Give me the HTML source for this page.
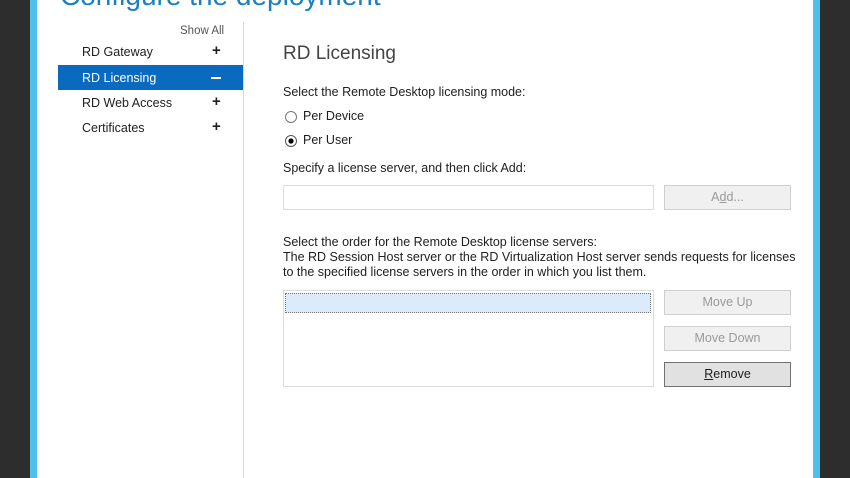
<!DOCTYPE html>
<html><head><style>
*{margin:0;padding:0;box-sizing:border-box}
body{width:850px;height:478px;overflow:hidden;background:#fff;font-family:"Liberation Sans",sans-serif;position:relative;color:#1e1e1e}
.a{position:absolute}
.t{font-size:12.5px;white-space:nowrap}
.btn{position:absolute;background:#f0f0f0;border:1px solid #cfcfcf;color:#9a9a9a;font-size:12.5px;text-align:center}
</style></head><body>
<div class="a" style="left:0;top:0;width:30px;height:478px;background:#2d2d2d"></div>
<div class="a" style="left:30px;top:0;width:7px;height:478px;background:#4fc0e8"></div>
<div class="a" style="left:813px;top:0;width:7px;height:478px;background:#4fc0e8"></div>
<div class="a" style="left:820px;top:0;width:30px;height:478px;background:#2d2d2d"></div>
<div class="a" style="left:60px;top:-20px;font-size:28px;color:#1a7fc0;white-space:nowrap">Configure the deployment</div>
<div class="a" style="left:243px;top:22px;width:1px;height:456px;background:#d8d8d8"></div>
<div class="a t" style="left:180px;top:25px;color:#555;font-size:11.5px">Show All</div>
<div class="a t" style="left:82px;top:45px">RD Gateway</div><div class="a" style="left:212px;top:42px;font-size:15px;font-weight:bold">+</div>
<div class="a" style="left:58px;top:65px;width:185px;height:25px;background:#0a6ac0"></div>
<div class="a t" style="left:82px;top:71px;color:#fff">RD Licensing</div><div class="a" style="left:211px;top:77px;width:10px;height:2px;background:#fff"></div>
<div class="a t" style="left:82px;top:96px">RD Web Access</div><div class="a" style="left:212px;top:93px;font-size:15px;font-weight:bold">+</div>
<div class="a t" style="left:82px;top:121px">Certificates</div><div class="a" style="left:212px;top:118px;font-size:15px;font-weight:bold">+</div>
<div class="a" style="left:283px;top:43px;font-size:19px;color:#444">RD Licensing</div>
<div class="a t" style="left:283px;top:85px">Select the Remote Desktop licensing mode:</div>
<div class="a" style="left:285px;top:111px;width:12px;height:12px;border:1px solid #777;border-radius:50%"></div>
<div class="a t" style="left:303px;top:109px">Per Device</div>
<div class="a" style="left:285px;top:135px;width:12px;height:12px;border:1px solid #555;border-radius:50%"></div>
<div class="a" style="left:289px;top:139px;width:4px;height:4px;background:#000;border-radius:50%;box-shadow:0 0 0 0.6px #000"></div>
<div class="a t" style="left:303px;top:133px">Per User</div>
<div class="a t" style="left:283px;top:161px">Specify a license server, and then click Add:</div>
<div class="a" style="left:283px;top:185px;width:371px;height:25px;border:1px solid #dcdcdc"></div>
<div class="btn" style="left:664px;top:185px;width:127px;height:25px;line-height:23px">A<u>d</u>d...</div>
<div class="a t" style="left:283px;top:235px;line-height:15px">Select the order for the Remote Desktop license servers:<br>The RD Session Host server or the RD Virtualization Host server sends requests for licenses<br>to the specified license servers in the order in which you list them.</div>
<div class="a" style="left:283px;top:290px;width:371px;height:97px;border:1px solid #dcdcdc"></div>
<div class="a" style="left:285px;top:293px;width:366px;height:20px;background:#dcebfc;border:1px dotted #777"></div>
<div class="btn" style="left:664px;top:290px;width:127px;height:25px;line-height:23px">Move Up</div>
<div class="btn" style="left:664px;top:326px;width:127px;height:25px;line-height:23px">Move Down</div>
<div class="btn" style="left:664px;top:362px;width:127px;height:25px;line-height:23px;background:#e1e1e1;border-color:#707070;color:#1e1e1e"><u>R</u>emove</div>
</body></html>
